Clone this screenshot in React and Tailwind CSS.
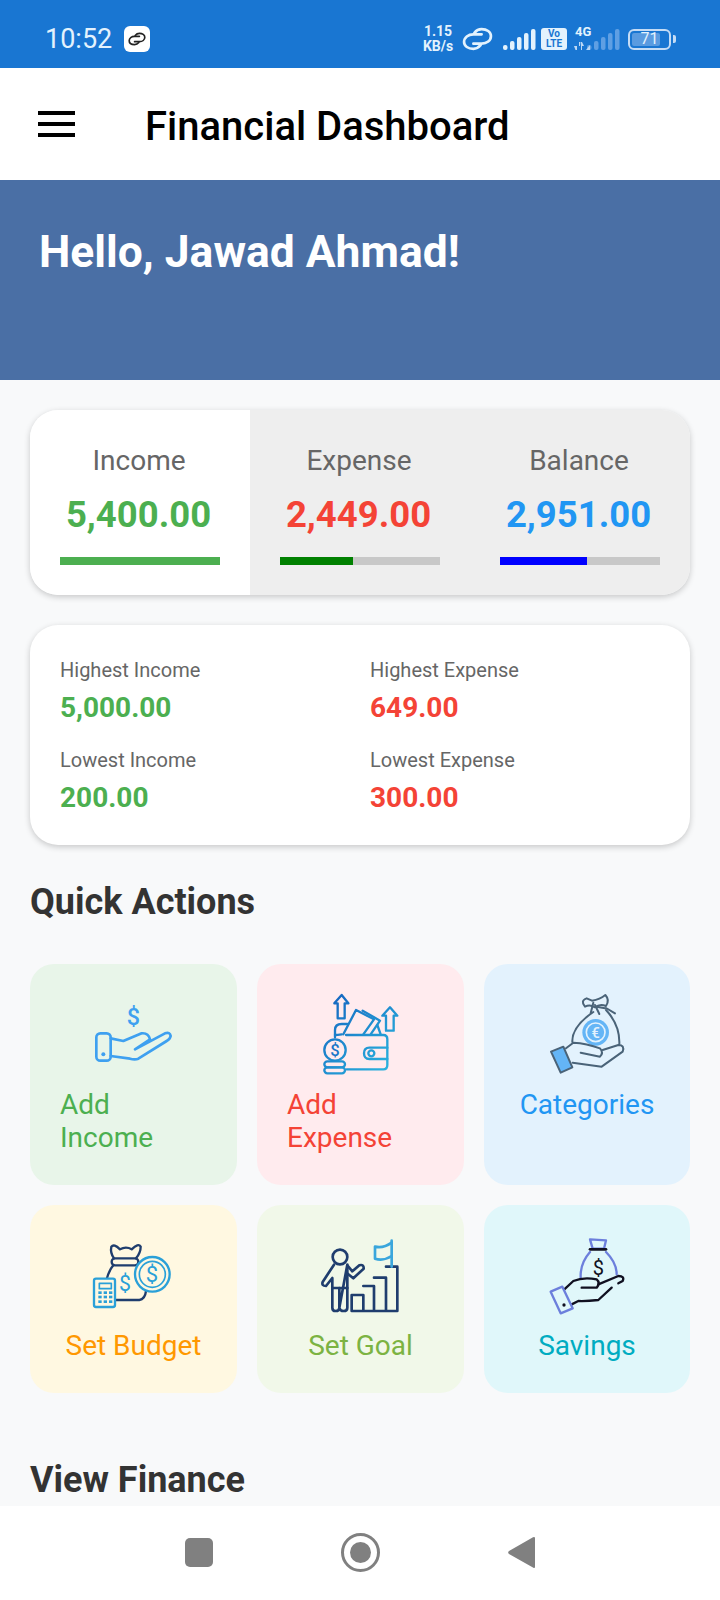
import { Fragment } from 'react';

const Dollar = ({ x, y, size = 56, fill, weight = 400 }) => (
    <text x={x} y={y} fontSize={size} fontWeight={weight} fill={fill} stroke="none" textAnchor="middle" fontFamily="Roboto, sans-serif">$</text>
);

const HandIcon = () => (
    <svg viewBox="0 0 390 300" className="w-[130px] h-[100px]" fill="none" stroke="#3ea0f0" strokeWidth="8" strokeLinecap="round" strokeLinejoin="round">
        <Dollar x={190} y={135} size={70} fill="#3ea0f0" weight={500} />
        <rect x="79" y="160" width="43" height="82" rx="12" />
        <circle cx="100" cy="223" r="6" fill="#3ea0f0" stroke="none" />
        <path d="M122 175 L160 183 L215 160 Q235 158 240 178 L195 208 L285 160 Q300 155 302 168 Q300 178 290 183 L205 236 Q195 240 180 236 L122 228" />
    </svg>
);

const WalletIcon = () => (
    <svg viewBox="0 0 390 300" className="w-[130px] h-[100px]" fill="none" stroke="url(#walletGrad)" strokeWidth="7" strokeLinejoin="round" strokeLinecap="round">
        <defs>
            <linearGradient id="walletGrad" gradientUnits="userSpaceOnUse" x1="80" y1="60" x2="290" y2="270">
                <stop offset="0" stopColor="#1565c0" />
                <stop offset="1" stopColor="#2bb8e0" />
            </linearGradient>
        </defs>
        <path d="M125 45 L145 70 L134 70 L134 115 L113 115 L113 70 L103 70 Z" />
        <path d="M270 82 L292 107 L281 107 L281 152 L258 152 L258 107 L247 107 Z" />
        <path d="M138 165 H250 Q262 165 262 178 V255 Q262 268 250 268 H140" />
        <path d="M105 172 V150 Q105 132 125 132 H142" />
        <path d="M105 165 Q112 165 125 163" />
        <path d="M262 203 H208 Q192 203 192 220 Q192 237 208 237 H262" />
        <circle cx="214" cy="220" r="9" />
        <path d="M130 163 L168 90 L222 118 L190 163" />
        <path d="M188 92 L240 122 L212 163" />
        <path d="M232 135 L242 163" />
        <circle cx="105" cy="210" r="32" />
        <Dollar x={105} y={228} size={50} fill="#1976c8" weight={500} />
        <rect x="73" y="244" width="62" height="18" rx="9" />
        <rect x="73" y="262" width="62" height="18" rx="9" />
    </svg>
);

const MoneyHandIcon = () => (
    <svg viewBox="0 0 390 300" className="w-[130px] h-[100px]" fill="none" stroke="#4a6378" strokeWidth="6" strokeLinejoin="round" strokeLinecap="round">
        <path d="M190 96 Q125 140 127 186" />
        <path d="M228 90 Q270 135 268 192" />
        <path d="M228 84 L255 100" />
        <path d="M165 80 Q150 62 170 55 L186 62 Q210 58 226 45 Q240 60 228 78 Q210 70 195 82 Q180 72 165 80 Z" />
        <path d="M190 68 L182 100 M195 75 L208 102 M200 80 L225 85" />
        <circle cx="197" cy="157" r="40" fill="#64b5f6" stroke="none" />
        <circle cx="197" cy="157" r="28" stroke="#e3f2fd" strokeWidth="5" />
        <text x="197" y="173" fontSize="44" fontWeight="500" fill="#e3f2fd" stroke="none" textAnchor="middle" fontFamily="Roboto, sans-serif">€</text>
        <path d="M108 205 L130 188 Q170 190 210 205 Q222 218 210 230 L152 218" />
        <path d="M218 210 L265 195 Q285 195 278 215 L215 260 L128 248" />
        <path d="M63 215 L100 200 L127 262 L92 278 Z" fill="#64b5f6" />
    </svg>
);

const BudgetIcon = () => {
    const keys = [];
    [200, 213, 227].forEach((y) => [90, 106, 122].forEach((x) => keys.push([x, y])));
    return (
        <svg viewBox="0 0 390 300" className="w-[130px] h-[100px]" fill="none" stroke="#1f3d6e" strokeWidth="7" strokeLinejoin="round" strokeLinecap="round">
            <path d="M132 97 Q120 80 124 62 Q132 52 150 70 Q168 60 185 70 Q205 50 212 62 Q212 80 198 97" />
            <rect x="125" y="97" width="80" height="21" rx="10" />
            <path d="M130 118 Q116 135 110 160" />
            <path d="M135 222 H208 Q225 220 228 195" />
            <Dollar x={165} y={194} size={64} fill="#2aa0d8" />
            <circle cx="247" cy="145" r="52" stroke="#2aa0d8" fill="#fff8e1" />
            <circle cx="247" cy="145" r="39" stroke="#2aa0d8" strokeWidth="5" />
            <Dollar x={246} y={169} size={66} fill="#2aa0d8" />
            <rect x="72" y="158" width="63" height="85" rx="6" stroke="#2aa0d8" fill="#fff8e1" />
            <rect x="88" y="172" width="36" height="16" stroke="#2aa0d8" strokeWidth="5" />
            {keys.map(([x, y]) => (
                <rect key={`${x}-${y}`} x={x - 5} y={y - 4} width="10" height="8" fill="#2aa0d8" stroke="none" />
            ))}
        </svg>
    );
};

const GoalIcon = () => (
    <svg viewBox="0 0 390 300" className="w-[130px] h-[100px]" fill="none" stroke="#1f3d6e" strokeWidth="8" strokeLinejoin="round" strokeLinecap="round">
        <circle cx="120" cy="93" r="22" />
        <path d="M102 116 L68 168 Q64 180 78 180 L97 156 V245 Q97 255 107 255 Q118 255 118 245 V186 M118 245 Q120 255 131 255 Q142 255 142 245 V116 Z" />
        <path d="M142 118 L157 136 L178 118 Q192 114 191 128 L160 157 L143 143" />
        <path d="M97 186 H142" />
        <path d="M155 207 H190 V255 H155 Z M190 180 H222 V255 H190 M222 155 H258 V255 H222 M258 122 H292 V255 H258" />
        <path d="M275 44 V122" stroke="#3aa6dc" />
        <path d="M275 50 Q250 68 225 62 V98 Q250 106 275 90" stroke="#3aa6dc" />
    </svg>
);

const SavingsIcon = () => (
    <svg viewBox="0 0 390 300" className="w-[130px] h-[100px]" fill="none" stroke="#101020" strokeWidth="7" strokeLinejoin="round" strokeLinecap="round">
        <path d="M180 40 L228 43 L222 68 L188 68 Z" stroke="#6c7fdc" />
        <path d="M180 70 H228" strokeWidth="8" />
        <path d="M180 78 Q150 112 152 155" stroke="#6c7fdc" />
        <path d="M228 78 Q260 110 260 145" stroke="#6c7fdc" />
        <Dollar x={205} y={146} size={60} fill="#101020" />
        <path d="M103 190 L130 165 Q160 152 200 160 Q212 170 200 185 H155" />
        <path d="M205 175 L265 150 Q285 150 278 165 L265 172" />
        <path d="M245 185 L205 222 Q170 226 145 225 L125 235" />
        <path d="M62 197 L97 182 L128 247 L92 262 Z" stroke="#6c7fdc" />
        <circle cx="102" cy="237" r="5" fill="#101020" stroke="none" />
    </svg>
);

const LinkGlyph = ({ className, color, width }) => (
    <svg viewBox="0 0 30 23" className={className} fill="none" stroke={color} strokeWidth={width} strokeLinecap="round">
        <path d="M19 7 H11 C6 7 2 10 2 14.5 C2 18.5 6 21 11 21 C14 21 16 20 18 17.5" />
        <path d="M11 16 H19 C24 16 28 13 28 8.5 C28 4.5 24 2 19 2 C16 2 14 3 12 5.5" />
    </svg>
);

const Signal = ({ color, className }) => (
    <svg viewBox="0 0 33 21" className={className} fill={color}>
        <rect x="0" y="16" width="4.5" height="5" rx="2" />
        <rect x="7" y="12" width="4.5" height="9" rx="2" />
        <rect x="14" y="8" width="4.5" height="13" rx="2" />
        <rect x="21" y="4" width="4.5" height="17" rx="2" />
        <rect x="28" y="0" width="4.5" height="21" rx="2" />
    </svg>
);

const StatusBar = () => (
    <div className="h-[68px] bg-[#1976d2] flex items-center pt-[10px] pl-[45px] pr-[44px] shrink-0">
        <span className="text-[27px] text-[#e3f2fd] leading-none">10:52</span>
        <span className="ml-[12px] w-[26px] h-[26px] bg-white rounded-[6px] flex items-center justify-center">
            <LinkGlyph className="w-[18px] h-[14px]" color="#222222" width="2.8" />
        </span>
        <div className="ml-auto flex items-center text-[#e3f2fd]">
            <div className="flex flex-col items-center font-bold text-[14px] leading-[15px] w-[30px]">
                <span>1.15</span>
                <span>KB/s</span>
            </div>
            <LinkGlyph className="ml-[9px] w-[31px] h-[24px]" color="#e3f2fd" width="2.6" />
            <Signal color="#e3f2fd" className="ml-[10px] w-[33px] h-[21px]" />
            <div className="ml-[5px] w-[26px] h-[22px] bg-[#e3f2fd] rounded-[3px] flex flex-col items-center justify-center text-[#1976d2] text-[10px] font-bold leading-[10px]">
                <span>Vo</span>
                <span>LTE</span>
            </div>
            <div className="ml-[7px] relative w-[46px] h-[24px]">
                <span className="absolute left-[1px] -top-[2px] text-[13px] font-bold leading-[13px]">4G</span>
                <Signal color="#5f9fe3" className="absolute left-[13px] top-[2px] w-[33px] h-[21px]" />
                <svg viewBox="0 0 18 8" className="absolute left-0 top-[15px] w-[18px] h-[8px]" fill="#bcd8f5">
                    <path d="M0 4 H3 V8 H1.5 Z M3.5 4 H5 V0 H6.5 L6 4 Z M8 0 L10 4 H8 V8 H7 V0 Z M12 8 L16 3 V8 Z" />
                </svg>
            </div>
            <div className="ml-[8px] flex items-center">
                <div className="w-[43px] h-[21px] border-2 border-[#c5dcf5] rounded-[6px] p-[2px] relative">
                    <div className="h-full w-[28px] bg-[#5a9be0] rounded-[2px]" />
                    <span className="absolute inset-0 flex items-center justify-center text-[16px] leading-none text-[#e3f2fd]">71</span>
                </div>
                <div className="ml-[2px] w-[3px] h-[8px] bg-[#c5dcf5] rounded-r-[2px]" />
            </div>
        </div>
    </div>
);

const TopBar = () => (
    <div className="h-[112px] bg-white flex items-center pl-[38px] shrink-0">
        <div className="w-[37px] h-[26px] flex flex-col justify-between">
            <span className="h-[4px] bg-black" />
            <span className="h-[4px] bg-black" />
            <span className="h-[4px] bg-black" />
        </div>
        <h1 className="ml-[70px] mt-[6px] text-[40px] font-medium text-black leading-none">Financial Dashboard</h1>
    </div>
);

const tabs = [
    { label: 'Income', value: '5,400.00', text: 'text-[#4caf50]', bar: 'bg-[#4caf50]', fill: 100, active: true },
    { label: 'Expense', value: '2,449.00', text: 'text-[#f44336]', bar: 'bg-[#008000]', fill: 45.35 },
    { label: 'Balance', value: '2,951.00', text: 'text-[#2196f3]', bar: 'bg-[#0000ff]', fill: 54.65 },
];

const stats = [
    { label: 'Highest Income', value: '5,000.00', color: 'text-[#4caf50]' },
    { label: 'Highest Expense', value: '649.00', color: 'text-[#f44336]' },
    { label: 'Lowest Income', value: '200.00', color: 'text-[#4caf50]' },
    { label: 'Lowest Expense', value: '300.00', color: 'text-[#f44336]' },
];

const actions = [
    { label: <Fragment>Add<br />Income</Fragment>, bg: 'bg-[#e8f5e9]', color: 'text-[#4caf50]', Icon: HandIcon, iconMargin: 'ml-[40px]' },
    { label: <Fragment>Add<br />Expense</Fragment>, bg: 'bg-[#ffebee]', color: 'text-[#f44336]', Icon: WalletIcon, iconMargin: 'ml-[43px]' },
    { label: 'Categories', bg: 'bg-[#e3f2fd]', color: 'text-[#2196f3]', Icon: MoneyHandIcon, iconMargin: 'ml-[46px]' },
    { label: 'Set Budget', bg: 'bg-[#fff8e1]', color: 'text-[#ff9800]', Icon: BudgetIcon, iconMargin: 'ml-[40px]', low: true },
    { label: 'Set Goal', bg: 'bg-[#f1f8e9]', color: 'text-[#7cb342]', Icon: GoalIcon, iconMargin: 'ml-[43px]', low: true },
    { label: 'Savings', bg: 'bg-[#e0f7fa]', color: 'text-[#00acc1]', Icon: SavingsIcon, iconMargin: 'ml-[46px]', low: true },
];

const BottomNav = () => (
    <div className="h-[94px] bg-white shrink-0 flex items-start justify-center pt-[27px]">
        <div className="flex items-center gap-[128px]">
            <span className="w-[28px] h-[29px] bg-[#808080] rounded-[5px]" />
            <span className="w-[39px] h-[39px] rounded-full border-[3px] border-[#808080] flex items-center justify-center">
                <span className="w-[21px] h-[21px] rounded-full bg-[#808080]" />
            </span>
            <svg viewBox="0 0 27 33" className="w-[27px] h-[33px]" fill="#808080">
                <path d="M26 1 a1 1 0 0 1 1 1 V31 a1 1 0 0 1 -1.6 .8 L1 18 a2 2 0 0 1 0 -3 L25 1.2 Z" />
            </svg>
        </div>
    </div>
);

const App = () => {
    return (
        <div className="w-[720px] h-[1600px] overflow-hidden flex flex-col bg-[#f8f9fa] font-['Roboto',sans-serif]">
            <StatusBar />
            <TopBar />
            <div className="flex-1 overflow-hidden">
                <div className="h-[200px] bg-[#4a6fa5] px-[40px] pt-[46px]">
                    <h2 className="text-[44.4px] font-bold text-white leading-[52px] -ml-[1px]">Hello, Jawad Ahmad!</h2>
                </div>
                <div className="px-[30px] pt-[30px]">
                    <div className="flex rounded-[28px] overflow-hidden shadow-[0_2px_6px_rgba(0,0,0,0.2)] h-[185px]">
                        {tabs.map((t) => (
                            <div key={t.label} className={`w-[220px] px-[30px] pt-[33px] flex flex-col items-center ${t.active ? 'bg-white' : 'bg-[#eeeeee]'}`}>
                                <span className="text-[28px] text-[#666666] leading-[36px] -ml-[2px]">{t.label}</span>
                                <span className={`mt-[14px] text-[36.5px] font-bold leading-[44px] -ml-[3px] ${t.text}`}>{t.value}</span>
                                <div className="mt-[20px] w-full h-[8px] bg-[#c8c8c8]">
                                    <div className={`h-full ${t.bar}`} style={{ width: `${t.fill}%` }} />
                                </div>
                            </div>
                        ))}
                    </div>
                    <div className="mt-[30px] h-[220px] bg-white rounded-[28px] shadow-[0_2px_6px_rgba(0,0,0,0.2)] pl-[30px] pt-[30px] grid grid-cols-[310px_1fr] gap-y-[19px] content-start">
                        {stats.map((s) => (
                            <div key={s.label} className="flex flex-col">
                                <span className="text-[20px] text-[#666666] leading-[30px]">{s.label}</span>
                                <span className={`text-[28px] font-bold leading-[36px] mt-[5px] ${s.color}`}>{s.value}</span>
                            </div>
                        ))}
                    </div>
                    <h3 className="mt-[35px] text-[36px] font-bold text-[#333333] leading-[44px]">Quick Actions</h3>
                    <div className="mt-[40px] grid grid-cols-[207px_207px_206px] gap-[20px]">
                        {actions.map(({ label, bg, color, Icon, iconMargin, low }, i) => (
                            <div key={i} className={`rounded-[24px] flex flex-col items-center ${bg} ${low ? 'h-[188px] pt-[21px]' : 'h-[221px] pt-[16px]'}`}>
                                <div className={`self-start ${iconMargin}`}>
                                    <Icon />
                                </div>
                                <span className={`text-[28px] leading-[33px] ${low ? 'mt-[3px]' : 'mt-[8px]'} ${i < 2 ? 'self-start pl-[30px]' : ''} ${color}`}>{label}</span>
                            </div>
                        ))}
                    </div>
                    <h3 className="mt-[65px] text-[36px] font-bold text-[#333333] leading-[44px]">View Finance</h3>
                </div>
            </div>
            <BottomNav />
        </div>
    );
};

export default App;
